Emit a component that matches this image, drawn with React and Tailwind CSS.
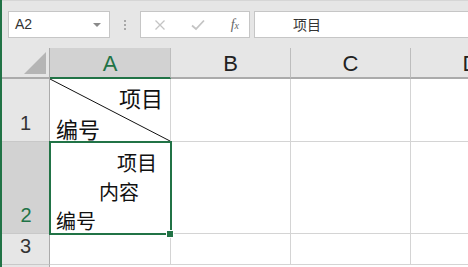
import React from "react";

const cjk = { fontFamily: '"Noto Sans CJK SC", "Noto Sans", sans-serif' };
const ui = { fontFamily: '"Liberation Sans", Arial, sans-serif' };

function ColHead({ label, active, w }) {
  return (
    <div
      className={`h-full shrink-0 flex items-center justify-center text-[22px] border-r border-[#bdbdbd] ${w} ${
        active
          ? "bg-[#d2d2d2] text-[#217346] border-b-2 border-b-[#217346]"
          : "bg-[#e6e6e6] text-[#222] border-b-2 border-b-[#ababab]"
      }`}
    >
      <span className="pt-[1px]">{label}</span>
    </div>
  );
}

function RowHead({ n, h, active }) {
  return (
    <div
      className={`w-[48px] shrink-0 flex items-end justify-center pb-[3px] text-[20px] border-b border-[#c8c8c8] ${
        active ? "bg-[#d2d2d2] text-[#217346]" : "bg-[#e6e6e6] text-[#333] border-r border-r-[#ababab]"
      } ${h}`}
    >
      {n}
    </div>
  );
}

function Cell({ w }) {
  return <div className={`${w} shrink-0 bg-white border-r border-b border-[#d4d4d4]`} />;
}

export default function App() {
  return (
    <div className="w-[468px] h-[267px] overflow-hidden bg-[#e6e6e6] border-l-2 border-[#217346] flex flex-col" style={ui}>
      {/* toolbar */}
      <div className="h-[48px] shrink-0 flex items-start pt-[10px] pl-[6px] border-t border-[#d6d6d6]">
        <div className="w-[102px] h-[27px] shrink-0 bg-white border border-[#c6c6c6] flex items-center justify-between pl-[6px] pr-[8px]">
          <span className="text-[14px] text-[#333]">A2</span>
          <span className="w-0 h-0 border-l-[4px] border-r-[4px] border-t-[4px] border-l-transparent border-r-transparent border-t-[#8a8a8a]" />
        </div>
        <div className="w-[30px] h-[27px] shrink-0 flex flex-col items-center justify-center gap-[2px]">
          <span className="w-[2px] h-[2px] bg-[#a8a8a8]" />
          <span className="w-[2px] h-[2px] bg-[#a8a8a8]" />
          <span className="w-[2px] h-[2px] bg-[#a8a8a8]" />
        </div>
        <div className="w-[110px] h-[27px] shrink-0 bg-white border border-[#c6c6c6] flex items-center justify-between pl-[13px] pr-[10px]">
          <svg width="12" height="12" viewBox="0 0 12 12">
            <path d="M1.5 1.5 L10.5 10.5 M10.5 1.5 L1.5 10.5" stroke="#c4c4c4" strokeWidth="1.3" fill="none" />
          </svg>
          <svg width="14" height="12" viewBox="0 0 14 12">
            <path d="M1 6.5 L5 10 L13 1.5" stroke="#c4c4c4" strokeWidth="1.8" fill="none" />
          </svg>
          <span className="text-[14px] italic text-[#666]" style={{ fontFamily: '"Liberation Serif", serif' }}>
            f<span className="text-[10px]">x</span>
          </span>
        </div>
        <div className="ml-[4px] flex-1 h-[27px] bg-white border border-[#c6c6c6] border-r-0 flex items-center pl-[38px]">
          <span className="text-[14px] text-[#333]" style={cjk}>项目</span>
        </div>
      </div>

      {/* column headers */}
      <div className="h-[31px] shrink-0 flex overflow-hidden">
        <div className="w-[48px] shrink-0 h-full relative border-b-2 border-[#ababab] border-r border-r-[#ababab]">
          <svg className="absolute right-[3px] bottom-[3px]" width="22" height="22" viewBox="0 0 22 22">
            <path d="M22 0 L22 22 L0 22 Z" fill="#b5b5b5" />
          </svg>
        </div>
        <ColHead label="A" w="w-[121px]" active />
        <ColHead label="B" w="w-[120px]" />
        <ColHead label="C" w="w-[120px]" />
        <ColHead label="D" w="w-[120px]" />
      </div>

      {/* row 1 */}
      <div className="flex h-[63px] shrink-0 overflow-hidden">
        <RowHead n="1" h="h-[63px]" />
        <div className="w-[121px] shrink-0 bg-white border-r border-b border-[#d4d4d4] relative flex flex-col justify-between" style={cjk}>
          <svg className="absolute left-0 top-0" width="120" height="62" viewBox="0 0 120 62">
            <line x1="0" y1="0" x2="120" y2="62" stroke="#111" strokeWidth="1" />
          </svg>
          <div className="text-[22px] leading-none text-right pr-[7px] pt-[7px] text-[#111]">项目</div>
          <div className="text-[22px] leading-none pl-[6px] pb-[2px] text-[#111]">编号</div>
        </div>
        <Cell w="w-[120px]" />
        <Cell w="w-[120px]" />
        <Cell w="w-[120px]" />
      </div>

      {/* row 2 */}
      <div className="flex h-[92px] shrink-0">
        <RowHead n="2" h="h-[92px]" active />
        <div className="w-[121px] shrink-0 bg-white border-r border-b border-[#d4d4d4] relative" style={cjk}>
          <div className="flex flex-col text-[20px] leading-[29px] text-[#111] pt-[6px]">
            <span className="pl-[67px]">项目</span>
            <span className="pl-[49px]">内容</span>
            <span className="pl-[6px]">编号</span>
          </div>
          <div className="absolute left-[-1px] top-[-1px] w-[123px] h-[94px] border-2 border-[#217346]" />
          <div className="absolute left-[117px] top-[89px] w-[6px] h-[6px] bg-[#217346] outline outline-1 outline-white" />
        </div>
        <Cell w="w-[120px]" />
        <Cell w="w-[120px]" />
        <Cell w="w-[120px]" />
      </div>

      {/* row 3 */}
      <div className="flex h-[31px] shrink-0 overflow-hidden">
        <RowHead n="3" h="h-[31px]" />
        <Cell w="w-[121px]" />
        <Cell w="w-[120px]" />
        <Cell w="w-[120px]" />
        <Cell w="w-[120px]" />
      </div>
      <div className="flex flex-1">
        <div className="w-[48px] bg-[#e6e6e6] border-r border-[#ababab]" />
        <div className="flex-1 bg-white" />
      </div>
    </div>
  );
}
